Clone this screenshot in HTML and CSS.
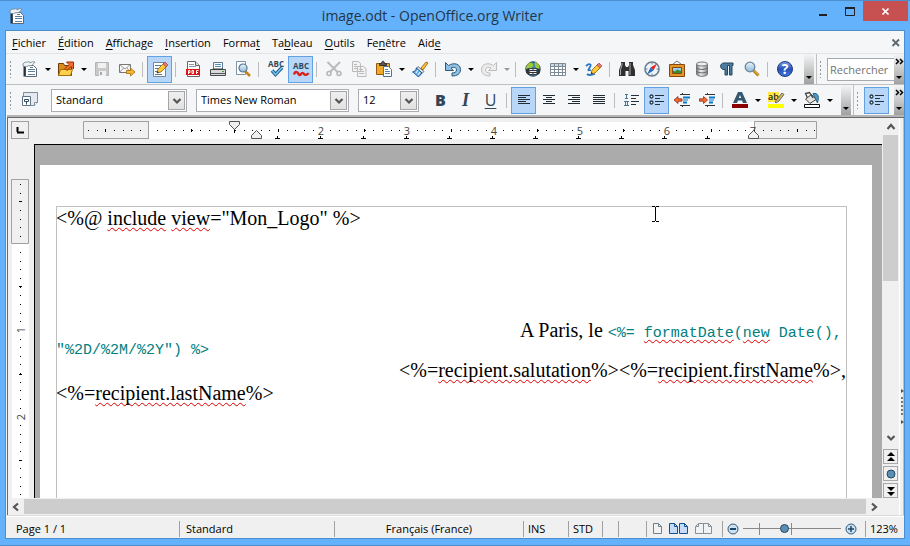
FILE: index.html
```html
<!DOCTYPE html>
<html lang="fr">
<head>
<meta charset="utf-8">
<title>image.odt - OpenOffice.org Writer</title>
<link rel="stylesheet" href="styles.css">
</head>
<body>
<svg width="0" height="0" class="defs" aria-hidden="true">
  <defs>
    <linearGradient id="glass" x1="0" y1="0" x2="0" y2="1"><stop offset="0" stop-color="#e8f3fb"/><stop offset="1" stop-color="#8fb9d8"/></linearGradient>
    <linearGradient id="blueball" x1="0" y1="0" x2="0" y2="1"><stop offset="0" stop-color="#7f9fe8"/><stop offset=".5" stop-color="#2850b8"/><stop offset="1" stop-color="#3c7ae0"/></linearGradient>
    <linearGradient id="steel" x1="0" y1="0" x2="1" y2="0"><stop offset="0" stop-color="#777"/><stop offset=".4" stop-color="#f4f4f4"/><stop offset="1" stop-color="#888"/></linearGradient>
    <symbol id="writer" viewBox="0 0 16 16">
      <path d="M3.500 4.500h8l3 3v8h-11z" fill="#fff" stroke="#5c666e"/>
      <path d="M2.500 5v10.500" stroke="#27323c" stroke-width="2"/>
      <path d="M1 3c1.500-2.500 3-1.500 4.500-2S8 .5 8 2c2-1.500 3-1.500 5-1-1 2-2.500 2-3 3.500-2 .5-3 0-4 .5-2 1-3.500.5-5 0z" fill="#eef3f6" stroke="#6b7d89" stroke-width=".8"/>
      <path d="M8 6.500h3M6 8.500h7M6 10.500h7M6 13.500h7" stroke="#5f829c"/>
    </symbol>
    <symbol id="bullets" viewBox="0 0 16 16">
      <circle cx="2.5" cy="4.5" r="1.5" fill="#fff" stroke="#24384a" stroke-width="1.3"/><circle cx="2.5" cy="10.5" r="1.5" fill="#fff" stroke="#24384a" stroke-width="1.3"/>
      <path d="M6 3.500h9M6 6.500h5M6 9.500h9M6 12.500h5" stroke="#24303a" stroke-width="1.200"/>
    </symbol>
    <symbol id="chev" viewBox="0 0 10 10"><path d="M1.500 3L5 6.500 8.500 3" fill="none" stroke="#555" stroke-width="2.2"/></symbol>
  </defs>
</svg>
<div class="window">
  <header class="titlebar">
    <svg class="ico"><use href="#writer"/></svg>
    <h1>image.odt - OpenOffice.org Writer</h1>
    <div class="winbtns">
      <button aria-label="Réduire"><svg width="10" height="12"><path d="M1 10h8" stroke="#222" stroke-width="2"/></svg></button>
      <button aria-label="Agrandir"><svg width="12" height="12"><path d="M1.500 3.500h9v7h-9z" fill="none" stroke="#222"/><path d="M1 3h10" stroke="#222" stroke-width="2"/></svg></button>
      <button class="close" aria-label="Fermer"><svg width="10" height="10"><path d="M1.500 2.500l6 6M7.500 2.500l-6 6" stroke="#fff" stroke-width="1.700"/></svg></button>
    </div>
  </header>
  <div class="client">
    <nav class="menubar">
      <button><u>F</u>ichier</button><button><u>É</u>dition</button><button><u>A</u>ffichage</button><button><u>I</u>nsertion</button><button>Forma<u>t</u></button><button>Ta<u>b</u>leau</button><button><u>O</u>utils</button><button>Fe<u>n</u>être</button><button>Aid<u>e</u></button>
      <button class="closedoc" aria-label="Fermer le document"><svg width="10" height="10"><path d="M1.500 1.500l6.500 6.500M8 1.500l-6.500 6.500" stroke="#5c6770" stroke-width="1.800"/></svg></button>
    </nav>

    <div class="toolbar" role="toolbar" aria-label="Standard">
      <i class="grip"></i>
      <button class="tb" aria-label="Nouveau"><svg class="ico"><use href="#writer"/></svg></button><button class="dd" aria-label="Types"></button>
      <button class="tb" aria-label="Ouvrir"><svg class="ico"><path d="M.5 14.500v-12h5l1 2h7v10z" fill="#d98f17" stroke="#6d3a08"/><path d="M2.500 8.500h12l-2 6h-12z" fill="#ffd04a" stroke="#a96c0a"/><path d="M7 7.500l4-4-2.500-2.500h7v7L13 5.500l-4 4z" fill="#f2702c" stroke="#9b2b0c"/></svg></button><button class="dd" aria-label="Récents"></button>
      <button class="tb" aria-label="Enregistrer"><svg class="ico"><path d="M1.500 1.500h13v13h-13z" fill="#c9c9c9" stroke="#b4b4b4"/><path d="M4 2h8v5H4zM5 10h7v5H5z" fill="#f1f1f1"/><path d="M6 11h2v3H6z" fill="#aaa"/></svg></button>
      <button class="tb" aria-label="Envoyer"><svg class="ico"><path d="M.5 3.500h11v8H.5z" fill="#fafafa" stroke="#777"/><path d="M.5 3.500L6 8l5.500-4.500M.5 11.500L4.500 7M11.500 11.500L8 7" fill="none" stroke="#999"/><path d="M7.500 9.500h4v-2.500l4.500 4-4.500 4v-2.500h-4z" fill="#f6b62e" stroke="#a9680a" stroke-width=".8"/></svg></button>
      <i class="sep"></i>
      <button class="tb on" aria-label="Éditer le fichier"><svg class="ico"><path d="M1.500 1.500h12v14h-12z" fill="#fff" stroke="#77858f"/><path d="M3 4.500h6M3 7.500h5M3 10.500h3M3 13.500h7" stroke="#527b9d"/><path d="M5 12l1-4 6-6 3 3-6 6z" fill="#ffca35" stroke="#80601a" stroke-width=".8"/><path d="M11 3l2-2 3 3-2 2z" fill="#e87972" stroke="#a33" stroke-width=".6"/><path d="M5 12l.5-2 1.500 1.500z" fill="#222"/></svg></button>
      <i class="sep"></i>
      <button class="tb" aria-label="Exporter en PDF"><svg class="ico"><path d="M2.500.5h8l4 4v11h-12z" fill="#fff" stroke="#666"/><path d="M10.500.5v4h4" fill="#ddd" stroke="#666"/><path d="M4 3.500h5M4 5.500h7" stroke="#89a"/><path d="M1 8h14v6H1z" fill="#e01414"/><path d="M3.500 13V9.500h1.500v2H4M7 9.500v3h1.500v-3zM11.500 13V9.500h2M11.500 11.500H13" fill="none" stroke="#fff"/></svg></button>
      <button class="tb" aria-label="Imprimer"><svg class="ico"><path d="M3.500 1.500h9v7h-9z" fill="#fff" stroke="#5d7890"/><path d="M5 3.500h6M5 5.500h6" stroke="#5691bd"/><path d="M.5 8.500h15v6H.5z" fill="#d7d9db" stroke="#454b50"/><path d="M3 8h10" stroke="#333"/><path d="M1 12.500h14" stroke="#555"/><path d="M12 10.500h2" stroke="#43a02c"/></svg></button>
      <button class="tb" aria-label="Aperçu"><svg class="ico"><path d="M1.500.5h9v13h-9z" fill="#fff" stroke="#7f93a3"/><path d="M10 10l5 5" stroke="#c5851b" stroke-width="2.500"/><circle cx="8" cy="7" r="4" fill="url(#glass)" stroke="#54728c" stroke-width="1.200"/></svg></button>
      <i class="sep"></i>
      <button class="tb" aria-label="Vérifier l'orthographe"><svg class="ico abc"><text x="8" y="6">ABC</text><path d="M4 9.500l3.500 4L14 6.500" fill="none" stroke="#1a5b8c" stroke-width="3.500"/><path d="M4 9.500l3.500 4L14 6.500" fill="none" stroke="#73c0ef" stroke-width="1.600"/></svg></button>
      <button class="tb on" aria-label="Vérification automatique"><svg class="ico abc"><text x="8" y="8">ABC</text><path d="M1 13.500c1-3.500 3.500-3 4.500-.5 1 1.500 1.500 1.500 2.500 0s2-1.500 3 0c1 1.500 3.500 1 4.500-1" fill="none" stroke="#dc2020" stroke-width="2.400"/></svg></button>
      <i class="sep"></i>
      <button class="tb" aria-label="Couper"><svg class="ico"><path d="M1.500 1l10 10M14 1L4 11" stroke="#bbb" stroke-width="2"/><circle cx="3" cy="12.500" r="2" fill="none" stroke="#b5b5b5" stroke-width="1.500"/><circle cx="13" cy="12.500" r="2" fill="none" stroke="#b5b5b5" stroke-width="1.500"/></svg></button>
      <button class="tb" aria-label="Copier"><svg class="ico"><path d="M1.500.5h6l2 2v8h-8zM6.500 5.500h6l2.500 2v8H6.500z" fill="#f2f2f2" stroke="#bbb"/><path d="M3 3.500h3M3 5.500h3M3 7.500h3M8 8.500h4M8 10.500h5M8 12.500h5" stroke="#bbb"/></svg></button>
      <button class="tb" aria-label="Coller"><svg class="ico"><path d="M.5 2.500h13v11H.5z" fill="#f0a92b" stroke="#945b0c"/><path d="M3.500 3.500v-1h2c0-3 3-3 3 0h2v2h-7z" fill="#555" stroke="#333"/><path d="M7.500 5.500h5l3 3v7h-8z" fill="#fff" stroke="#55738d"/><path d="M9 8.500h3M9 10.500h5M9 12.500h5" stroke="#5487b0"/></svg></button><button class="dd" aria-label="Options de collage"></button>
      <button class="tb" aria-label="Appliquer le format"><svg class="ico"><path d="M9 7l5-6 2 1-5 7z" fill="#f8c12e" stroke="#8d6010" stroke-width=".8"/><path d="M6 5.500l6 5-2 2-6-5z" fill="#e3e3e3" stroke="#555" stroke-width=".8"/><path d="M4.500 7L10 12l-3 3.500C5 16 3 12 .5 11 3 10.500 4 9 4.500 7z" fill="#65aee8" stroke="#1e5a96"/><path d="M6 9l-2 3M8 11l-2 3" stroke="#fff"/></svg></button>
      <i class="sep"></i>
      <button class="tb" aria-label="Annuler"><svg class="ico"><path d="M.5 1.500v8h8L6 7c3-1.500 5.500-.5 5.500 2 0 2-2 3-4.500 3v3c5 0 8.500-2 8.500-6.500C15.500 3 9 1 3.500 4.500z" fill="#8cc0e4" stroke="#2f5876"/></svg></button><button class="dd" aria-label="Historique"></button>
      <button class="tb" aria-label="Restaurer"><svg class="ico"><path d="M15.500 1.500v8h-8L10 7c-3-1.500-5.500-.5-5.500 2 0 2 2 3 4.500 3v3C4 15 .5 13 .5 8.500.5 3 7 1 12.500 4.500z" fill="#ececec" stroke="#bdbdbd"/></svg></button><button class="dd off" aria-label="Restauration"></button>
      <i class="sep"></i>
      <button class="tb" aria-label="Hyperlien"><svg class="ico"><circle cx="8" cy="8" r="7.200" fill="#3d83b7" stroke="#263f50"/><path d="M2 4c3-4 5-2 6-1s0 4-3 4-3 2-4 0zM10 1c5 1 5 6 4 7-3 0-5-3-4-7z" fill="#9fc83a"/><path d="M4.500 8.500h3v4h-3c-3 0-3-4 0-4zM8.500 8.500h3c3 0 3 4 0 4h-3zM5 10.500h6" fill="none" stroke="#333" stroke-width="2.600"/><path d="M4.500 8.500h3M4.500 12.500h3M8.500 8.500h3M8.500 12.500h3M5 10.500h6" stroke="#eee"/></svg></button>
      <button class="tb" aria-label="Tableau"><svg class="ico"><path d="M.5 2.500h15v12H.5z" fill="#fff" stroke="#7c8a95"/><path d="M1 3h14v2.500H1z" fill="#cbd8e2"/><path d="M.5 5.500h15M.5 8.500h15M.5 11.500h15M4.500 2.500v12M8.500 2.500v12M12.500 2.500v12" stroke="#7c8a95"/></svg></button><button class="dd" aria-label="Taille du tableau"></button>
      <button class="tb" aria-label="Dessin"><svg class="ico"><path d="M0 5c3-3 6-2 4 1s-3 4 1 3M1 13c2 2 5 1 8 0" fill="none" stroke="#2a78c8" stroke-width="1.800"/><path d="M5 13l1-4 6-6 3 3-6 6z" fill="#ffca35" stroke="#80601a" stroke-width=".8"/><path d="M11 4l2-2 3 3-2 2z" fill="#e87972" stroke="#a33" stroke-width=".6"/><path d="M5 13l.5-2 1.500 1.500z" fill="#222"/></svg></button>
      <i class="sep"></i>
      <button class="tb" aria-label="Rechercher et remplacer"><svg class="ico"><path d="M2 4V1h4v3l1 2h2l1-2V1h4v3l2 5v6H9.500V10h-3v5H0V9z" fill="#303030"/><path d="M3 2v2L1.500 9v5M11 2v3L11 9v5" stroke="#aaa" fill="none"/></svg></button>
      <button class="tb" aria-label="Navigateur"><svg class="ico"><circle cx="8" cy="8" r="7" fill="#edf5fb" stroke="#6b7b88" stroke-width="1.600"/><path d="M8 2v1.500M8 12.500V14M2 8h1.500M12.500 8H14" stroke="#678"/><path d="M13 2.500L9.500 9.500 6.500 6.500z" fill="#e42424"/><path d="M3 13.500L6.500 6.500l3 3z" fill="#2468bf"/></svg></button>
      <button class="tb" aria-label="Galerie"><svg class="ico"><path d="M4 3l4-3 4 3" fill="none" stroke="#777"/><path d="M.5 3.500h15v12H.5z" fill="#e3952c" stroke="#87480b"/><path d="M3.500 6.500h9v6h-9z" fill="#96d2f0" stroke="#87480b"/><path d="M4 12V9.500l2 1 2-2 4 1.500v2z" fill="#398a33"/></svg></button>
      <button class="tb" aria-label="Sources de données"><svg class="ico"><path d="M2.500 3v10c0 3 11 3 11 0V3" fill="url(#steel)" stroke="#777"/><ellipse cx="8" cy="3" rx="5.500" ry="2" fill="#eee" stroke="#777"/><path d="M2.500 6.500c0 2.500 11 2.500 11 0M2.500 10c0 2.500 11 2.500 11 0" fill="none" stroke="#666"/></svg></button>
      <button class="tb" aria-label="Caractères non imprimables"><svg class="ico"><path d="M14 2H5C.5 2 .5 8.500 5 8.500h1V14h2.500V4.500h2V14H13V4.500h1z" fill="#4d7c9e" stroke="#24465e"/></svg></button>
      <button class="tb" aria-label="Zoom"><svg class="ico"><path d="M9.500 9.500l5 5" stroke="#b77b1a" stroke-width="3"/><path d="M10 9.500l4.500 4.500" stroke="#f4c55b"/><circle cx="6" cy="6" r="4.800" fill="url(#glass)" stroke="#68879f" stroke-width="1.300"/></svg></button>
      <i class="sep"></i>
      <button class="tb" aria-label="Aide"><svg class="ico"><circle cx="8" cy="8" r="7.500" fill="url(#blueball)" stroke="#223c78"/><text class="q" x="8" y="13">?</text></svg></button>
      <button class="more push" aria-label="Plus"></button>
      <i class="grip"></i>
      <label class="search"><input type="text" placeholder="Rechercher" aria-label="Rechercher"></label>
      <button class="more" aria-label="Autres boutons"><svg width="9" height="8"><path d="M1 1l2.500 2.500L1 6M5 1l2.500 2.500L5 6" fill="none" stroke="#000" stroke-width="1.500"/></svg></button>
    </div>

    <div class="toolbar format" role="toolbar" aria-label="Formatage">
      <i class="grip"></i>
      <button class="tb" aria-label="Styles et formatage"><svg class="ico"><path d="M1.500.5h14v10l-3 3h-11z" fill="#e4eaf0" stroke="#7c8d9b"/><path d="M15.500 10.500h-3v3" fill="#fff" stroke="#7c8d9b"/><path d="M.5 4.500h8v9h-8z" fill="#fff" stroke="#617485"/><path d="M2.500 7.500h4v2h-4zM4.500 9.500v3" fill="none" stroke="#334a5d"/></svg></button>
      <span class="combo style"><select aria-label="Style"><option>Standard</option></select><svg><use href="#chev" x="3" y="4" width="10" height="10"/></svg></span>
      <span class="combo font"><select aria-label="Police"><option>Times New Roman</option></select><svg><use href="#chev" x="3" y="4" width="10" height="10"/></svg></span>
      <span class="combo size"><select aria-label="Taille"><option>12</option></select><svg><use href="#chev" x="3" y="4" width="10" height="10"/></svg></span>
      <button class="tb letter bold">B</button><button class="tb letter italic">I</button><button class="tb letter under">U</button>
      <i class="sep"></i>
      <button class="tb on" aria-label="Gauche"><svg class="ico"><path d="M2 3.500h12M2 5.500h8M2 7.500h12M2 9.500h8M2 11.500h12" stroke="#222c34"/></svg></button>
      <button class="tb" aria-label="Centré"><svg class="ico"><path d="M2 3.500h12M5 5.500h6M2 7.500h12M5 9.500h6M2 11.500h12" stroke="#222c34"/></svg></button>
      <button class="tb" aria-label="Droite"><svg class="ico"><path d="M2 3.500h12M6 5.500h8M2 7.500h12M6 9.500h8M2 11.500h12" stroke="#222c34"/></svg></button>
      <button class="tb" aria-label="Justifié"><svg class="ico"><path d="M2 3.500h12M2 5.500h12M2 7.500h12M2 9.500h12M2 11.500h12" stroke="#222c34"/></svg></button>
      <i class="sep"></i>
      <button class="tb" aria-label="Numérotation"><svg class="ico"><path d="M1 2.500h3M2.500 2v5M1 6.500h3M0 9.500h5M1.500 9v5M3.500 9v5M0 13.500h5" stroke="#4b7690"/><path d="M7 3.500h8M7 6.500h5M7 9.500h8M7 12.500h5" stroke="#24303a" stroke-width="1.200"/></svg></button>
      <button class="tb on" aria-label="Puces"><svg class="ico"><use href="#bullets"/></svg></button>
      <button class="tb" aria-label="Diminuer le retrait"><svg class="ico"><path d="M6 2.500h10M6 13.500h10M8.500 1v2M8.500 13v2" stroke="#333"/><path d="M9 5.500h7M9 10.500h4" stroke="#0878c8" stroke-width="2"/><path d="M9 8h5" stroke="#0878c8"/><path d="M0 8l4-3.500v2.300h4v2.400H4v2.300z" fill="#ef6c3b" stroke="#982a0d" stroke-width=".8"/></svg></button>
      <button class="tb" aria-label="Augmenter le retrait"><svg class="ico"><path d="M6 2.500h10M6 13.500h10M8.500 1v2M8.500 13v2" stroke="#333"/><path d="M10 5.500h6M10 10.500h4" stroke="#0878c8" stroke-width="2"/><path d="M10 8h5" stroke="#0878c8"/><path d="M8.500 8l-4-3.500v2.300h-4v2.400h4v2.300z" fill="#ef6c3b" stroke="#982a0d" stroke-width=".8"/></svg></button>
      <i class="sep"></i>
      <button class="tb" aria-label="Couleur de police"><svg class="ico"><path d="M1 11L6 0h4l5 11h-4l-1-2.500H6L5 11zM6.800 6h2.400L8 3z" fill="#34566f" fill-rule="evenodd"/><path d="M0 12h16v4H0z" fill="#8b0000"/></svg></button><button class="dd" aria-label="Couleurs"></button>
      <button class="tb" aria-label="Surlignage"><svg class="ico ab"><path d="M0 0h11v10H0z" fill="#ffe840"/><text x="0" y="8">ab</text><path d="M7 10l2-3 5-6 2 1.500-5 6.500-3 2z" fill="#c9b36a" stroke="#555" stroke-width=".8"/><path d="M0 12h16v4H0z" fill="#ff0"/></svg></button><button class="dd" aria-label="Couleurs de surlignage"></button>
      <button class="tb" aria-label="Arrière-plan"><svg class="ico"><path d="M9 1.500c6-1 6 4 4.500 9.500L11 6z" fill="#4d9acb" stroke="#276587"/><path d="M1.500 7l6-4.500 4.500 5-6 4z" fill="#e3e3e3" stroke="#444"/><path d="M3.500 6l-2-4.500 4-1L9 6" fill="none" stroke="#444" stroke-width="1.300"/><path d="M.5 12.500h15v3H.5z" fill="#fff" stroke="#111"/></svg></button><button class="dd" aria-label="Couleurs d'arrière-plan"></button>
      <button class="more push" aria-label="Plus"></button>
      <i class="grip"></i>
      <button class="tb on" aria-label="Puces et numérotation"><svg class="ico"><use href="#bullets"/></svg></button>
      <button class="more gap" aria-label="Autres boutons"><svg width="9" height="8"><path d="M1 1l2.500 2.500L1 6M5 1l2.500 2.500L5 6" fill="none" stroke="#000" stroke-width="1.500"/></svg></button>
    </div>

    <main class="work">
      <div class="corner"><button aria-label="Type de tabulation"><svg width="8" height="8"><path d="M1.500 1v5M1 6.500h7" stroke="#000" stroke-width="2"/></svg></button></div>
      <svg class="hruler" aria-label="Règle horizontale">
        <path d="M115 4h605v17H115z" fill="#fff"/>
        <path d="M49.500 3.500h65v17h-65zM720.500 3.500h62v17h-62z" fill="#f0f0f0" stroke="#a0a0a0"/>
        <path d="M114.500 3v18" stroke="#a0a0a0"/>
        <g shape-rendering="crispEdges" stroke="#000">
          <path d="M54 12.500h60" stroke-dasharray="1 7.650"/><path d="M123 12.500h658" stroke-dasharray="1 7.650"/>
          <path d="M71.500 11v3M157.500 11v3M244.500 11v3M330.500 11v3M417.500 11v3M503.500 11v3M589.500 11v3M677.500 11v3M763.500 11v3"/>
          <path d="M243.500 18v3M286.500 18v3M329.500 18v3M372.500 18v3M415.500 18v3M458.500 18v3M501.500 18v3M544.500 18v3M587.500 18v3M630.500 18v3M673.500 18v3"/>
          <path d="M241 20.500h436" stroke-dasharray="5 38"/>
        </g>
        <path d="M281 6h11v11h-11zM367 6h11v11h-11zM454 6h11v11h-11zM540 6h11v11h-11zM627 6h11v11h-11z" fill="#fff"/>
        <g class="num"><text x="287" y="17">2</text><text x="373" y="17">3</text><text x="460" y="17">4</text><text x="546" y="17">5</text><text x="633" y="17">6</text><text x="719" y="17">7</text></g>
        <path d="M200.500 11v4" stroke="#000"/>
        <path d="M195.500 3.500h10v3l-5 5-5-5z M217.500 20.500h10v-3l-5-5-5 5z M714.500 20.500h10v-3l-5-5-5 5z" fill="#f0f0f0" stroke="#555"/>
      </svg>
      <svg class="vruler" aria-label="Règle verticale">
        <path d="M4 99h17v400H4z" fill="#fff"/><path d="M3.500 35.500h17v64h-17z" fill="#f0f0f0" stroke="#a0a0a0"/>
        <g shape-rendering="crispEdges" stroke="#000"><path d="M12.500 40v56M12.500 108v600" stroke-dasharray="1 7.650"/><path d="M11 57.500h3M11 142.500h3M11 230.500h3M11 316.500h3"/></g>
        <path d="M6 180h13v11H6zM6 267h13v11H6z" fill="#fff"/>
        <g class="num"><text transform="translate(17 186) rotate(-90)">1</text><text transform="translate(17 273) rotate(-90)">2</text></g>
      </svg>
      <div class="canvas">
        <article class="page">
          <div class="body">
            <p>&lt;%@ <span class="sp">include</span> <span class="sp">view</span>="Mon_Logo" %&gt;</p>
            <p class="date">A Paris, le <code>&lt;%= <span class="sp">formatDate</span>(<span class="sp">new</span> Date(),</code></p>
            <p class="code"><code>"%2D/%2M/%2Y") %&gt;</code></p>
            <p class="right">&lt;%=<span class="sp">recipient.salutation</span>%&gt;&lt;%=<span class="sp">recipient.firstName</span>%&gt;,</p>
            <p>&lt;%=<span class="sp">recipient.lastName</span>%&gt;</p>
          </div>
          <svg class="ibeam" width="9" height="17"><path d="M1 .5h3M5 .5h3M1 15.500h3M5 15.500h3M4.500 1v14" stroke="#000"/></svg>
        </article>
      </div>
      <div class="vscroll">
        <button class="up" aria-label="Haut"><svg width="10" height="10"><path d="M1.500 7L5 3l3.500 4" fill="none" stroke="#555" stroke-width="2.200"/></svg></button>
        <i class="thumb"></i>
        <button class="down" aria-label="Bas"><svg width="10" height="10"><use href="#chev"/></svg></button>
        <button class="nav" aria-label="Page précédente"><svg width="8" height="10"><path d="M4 0l4 4H0zM4 5l4 4H0z"/></svg></button>
        <button class="nav" aria-label="Navigation"><svg width="10" height="10"><circle cx="5" cy="5" r="4" fill="#5d8fb5" stroke="#234963"/></svg></button>
        <button class="nav" aria-label="Page suivante"><svg width="8" height="10"><path d="M4 5L0 1h8zM4 10L0 6h8z"/></svg></button>
      </div>
      <div class="hscroll">
        <button aria-label="Gauche"><svg width="10" height="10"><path d="M7 1.500L3 5l4 3.500" fill="none" stroke="#555" stroke-width="2.200"/></svg></button>
        <i class="thumb"></i>
        <button aria-label="Droite"><svg width="10" height="10"><path d="M3 1.500L7 5 3 8.500" fill="none" stroke="#555" stroke-width="2.200"/></svg></button>
      </div>
      <div class="split"><svg width="4" height="36"><path d="M1 0l3 2-3 2zM1 31l3 2-3 2z" fill="#555"/><path d="M2 8v20" stroke="#777" stroke-width="2" stroke-dasharray="2 2"/></svg></div>
    </main>

    <footer class="status">
      <span class="pg">Page 1 / 1</span><span class="st">Standard</span><span class="lang">Français (France)</span><span class="ins">INS</span><span class="std">STD</span><span class="e1"></span><span class="e2"></span>
      <span class="views">
        <button aria-label="Page simple"><svg width="10" height="12"><path d="M.5.500h5l3 3v7h-8z" fill="#f0f2f4" stroke="#73808b"/><path d="M5.500.500v3h3" fill="none" stroke="#73808b"/></svg></button>
        <button aria-label="Plusieurs pages"><svg width="20" height="12"><path d="M.5.500h5l3 3v7h-8zM10.500.500h5l3 3v7h-8z" fill="#c5dcf8" stroke="#184f91"/><path d="M5.500.500v3h3M15.500.500v3h3" fill="none" stroke="#184f91"/></svg></button>
        <button aria-label="Livre"><svg width="18" height="12"><path d="M3.500.500h5v10h-8v-7zM8.500.500h5l3 3v7h-8z" fill="#f0f2f4" stroke="#84909a"/><path d="M3.500.500v3h-3M13.500.500v3h3" fill="none" stroke="#84909a"/></svg></button>
      </span>
      <span class="zoom">
        <button aria-label="Zoom arrière"><svg width="12" height="12"><circle cx="6" cy="6" r="5" fill="#c9e1f3" stroke="#355b7a"/><path d="M3 6h6" stroke="#1d4565" stroke-width="2"/></svg></button>
        <label class="slide"><input type="range" min="0" max="100" value="42" aria-label="Zoom"></label>
        <button aria-label="Zoom avant"><svg width="12" height="12"><circle cx="6" cy="6" r="5" fill="#c9e1f3" stroke="#355b7a"/><path d="M3 6h6M6 3v6" stroke="#1d4565" stroke-width="1.500"/></svg></button>
      </span>
      <span class="pct">123%</span>
    </footer>
  </div>
</div>
</body>
</html>
```
FILE: styles.css
```css
* { box-sizing: border-box; }
html, body { height: 100%; margin: 0; }
body { font: 11px/16px "Open Sans", "Noto Sans", sans-serif; color: #000; overflow: hidden; }
button { font: inherit; color: inherit; background: none; border: 0; padding: 0; margin: 0; }
svg { display: block; flex: none; }
.defs { position: absolute; }
.ico { width: 16px; height: 16px; overflow: visible; }

.window { height: 100vh; display: flex; flex-direction: column; background: #65b2fc; border: solid #4d8fcd; border-width: 1px 0; padding: 0 5px 6px; }
.titlebar { height: 29px; flex: none; display: flex; align-items: center; padding-left: 4px; margin-right: -3px; }
.titlebar h1 { flex: 1; margin: 0; padding-left: 31px; text-align: center; font-size: 14px; font-weight: 400; line-height: 20px; color: #233547; }
.winbtns { display: flex; align-self: flex-start; }
.winbtns button { height: 20px; width: 27px; display: flex; align-items: center; justify-content: center; }
.winbtns .close { width: 45px; background: #c75050; }

.client { flex: 1; min-height: 0; display: flex; flex-direction: column; border: 1px solid #4d8fcd; background: #f5f6f7; }
.menubar { height: 23px; flex: none; display: flex; align-items: center; gap: 12px; padding: 2px 3px 0 6px; border-bottom: 1px solid #e2e4e7; }
.menubar u { text-underline-offset: 2px; }
.closedoc { margin-left: auto; }

.toolbar { height: 31px; flex: none; display: flex; align-items: center; border-bottom: 1px solid #c0c0c0; padding-left: 3px; }
.format { height: 30px; border-bottom: 0; }
.grip { flex: none; width: 3px; height: 18px; margin-right: 5px; background: radial-gradient(circle, #8f959a 1px, transparent 1px) 0 0 / 3px 4px; }
.tb { flex: none; width: 25px; height: 27px; display: flex; align-items: center; justify-content: center; border: 1px solid transparent; }
.on { background: #b8d7f8; border-color: #62a2e4; }
.sep { flex: none; width: 8px; height: 15px; background: linear-gradient(#bcbcbc, #bcbcbc) 3px 0 / 1px 100% no-repeat; }
.dd { flex: none; width: 11px; height: 27px; display: flex; align-items: center; justify-content: center; }
.dd::before, .more::after { content: ""; border: 3px solid transparent; border-top-color: #000; border-bottom: 0; }
.dd.off::before { border-top-color: #999; }
.abc text { font: 700 8px "Open Sans", sans-serif; fill: #33495a; text-anchor: middle; }
.ab text { font: 600 9px "Open Sans", sans-serif; fill: #222; }
.q { font: 700 14px "Open Sans", sans-serif; fill: #fff; text-anchor: middle; }
.more { flex: none; align-self: stretch; width: 10px; display: flex; flex-direction: column; align-items: center; justify-content: flex-end; padding-bottom: 5px; background: linear-gradient(#f4f5f6, #a0a0a0); }
.more svg { margin-bottom: auto; margin-top: 4px; }
.push { margin-left: auto; margin-right: 5px; box-shadow: 2px 0 #f5f6f7, 3px 0 #c0c0c0; }
.gap { margin-left: 5px; }
.search { flex: none; width: 67px; height: 23px; }
.search input { width: 100%; height: 100%; border: 1px solid #a5aaaf; border-right: 0; border-radius: 0; padding: 0 0 0 2px; font: inherit; font-size: 11px; background: #fff; outline: 0; }
.search input::placeholder { color: #737373; opacity: 1; }
.combo { flex: none; display: flex; position: relative; height: 23px; margin-left: 9px; background: #fff; border: 1px solid #abadb3; }
.combo select { appearance: none; width: 100%; border: 0; padding: 0 20px 0 4px; background: transparent; font: inherit; color: #000; }
.combo svg { position: absolute; right: 1px; top: 1px; width: 17px; height: 19px; background: linear-gradient(#efefef, #e2e2e2); border: 1px solid #a5a5a5; pointer-events: none; }
.style { width: 136px; }
.font { width: 153px; }
.size { width: 61px; margin-right: 9px; }
.letter { font-size: 16px; color: #314556; }
.bold { font-weight: 800; }
.italic { font-family: "Liberation Serif", serif; font-style: italic; font-weight: 700; font-size: 18px; }
.under { text-decoration: underline; text-underline-offset: 2px; }

.work { flex: 1; min-height: 0; display: grid; grid-template: 26px minmax(0, 1fr) 18px / 26px minmax(0, 1fr) 17px 5px; background: #f0f0f0; border: solid #696969; border-width: 1px 0 0 1px; box-shadow: 0 -2px #b5b5b5; margin: 2px 0 0 1px; }
.corner { padding: 3px; }
.corner button { width: 18px; height: 18px; border: 1px solid #a0a0a0; display: flex; align-items: center; justify-content: center; }
.hruler { width: 100%; height: 26px; }
.vruler { grid-column: 1; grid-row: 2; width: 26px; height: 100%; overflow: hidden; }
.num text { font: 11px "Open Sans", sans-serif; fill: #444; text-anchor: middle; }
.canvas { grid-column: 2; grid-row: 2; background: #ababab; border: solid #000; border-width: 1px 0 0 1px; padding: 20px 10px 0 5px; overflow: hidden; }
.page { position: relative; height: 100%; background: #fff; padding: 41px 25px 0 16px; }
.body { height: 100%; border: 1px solid #c0c0c0; border-bottom: 0; font: 20px/23px "Liberation Serif", serif; white-space: nowrap; }
.body p { margin: 0; text-indent: -1px; }
.body .date { margin-top: 89px; padding-left: 464px; }
.body .code { line-height: 17px; display: flex; }
.body .right { text-align: right; }
code { font: 15px/17px "Liberation Mono", monospace; color: #008080; }
.sp { text-decoration: underline wavy #e00000 1px; text-underline-offset: 2px; text-decoration-skip-ink: none; }
.ibeam { position: absolute; left: 611px; top: 41px; }

.vscroll { grid-column: 3; grid-row: 1 / 3; display: flex; flex-direction: column; }
.vscroll button, .hscroll button { flex: none; display: flex; align-items: center; justify-content: center; }
.vscroll .up { height: 17px; }
.thumb { background: #cdcdcd; }
.vscroll .thumb { height: 146px; margin: 0 1px; }
.vscroll .down { height: 18px; margin-top: auto; }
.vscroll .nav { height: 15px; border: 1px solid #a8a8a8; margin: 2px 1px 0; }
.hscroll { grid-column: 1 / 3; grid-row: 3; display: flex; padding: 1px 0 2px; }
.hscroll .thumb { flex: 1; }
.hscroll button { width: 16px; }
.split { grid-column: 4; grid-row: 1 / 4; border: solid #fff; border-width: 0 0 0 1px; border-right: 1px solid #c0c0c0; display: flex; justify-content: center; padding-top: 271px; }

.status { height: 22px; flex: none; display: flex; align-items: center; background: #f0f0f0; border-top: 1px solid #fff; box-shadow: 0 -1px #dcdcdc; padding: 2px 0 0 1px; }
.status > span { height: 16px; border-left: 1px solid #a0a0a0; padding-left: 6px; flex: none; }
.status .pg { width: 172px; border: 0; padding-left: 9px; }
.status .st { width: 155px; }
.status .lang { flex: 1; text-align: center; padding: 0; }
.status .ins { width: 45px; padding-left: 4px; }
.status .std { width: 34px; padding-left: 4px; }
.status .e1 { width: 16px; }
.status .e2 { width: 28px; }
.status .views { width: 76px; display: flex; align-items: center; gap: 6px; }
.status .zoom { width: 143px; display: flex; align-items: center; gap: 4px; padding-left: 4px; }
.slide { width: 98px; height: 12px; display: flex; background: linear-gradient(#888, #888) 0 5px / 100% 1px no-repeat, linear-gradient(#888, #888) 16px 0 / 1px 100% no-repeat, linear-gradient(#888, #888) 48px 0 / 1px 100% no-repeat; }
.slide input { appearance: none; width: 100%; margin: 0; background: transparent; }
.slide input::-webkit-slider-thumb { appearance: none; width: 9px; height: 9px; border-radius: 50%; border: 1px solid #234963; background: #5d8fb5; }
.status .pct { width: 39px; padding-left: 4px; }
```
